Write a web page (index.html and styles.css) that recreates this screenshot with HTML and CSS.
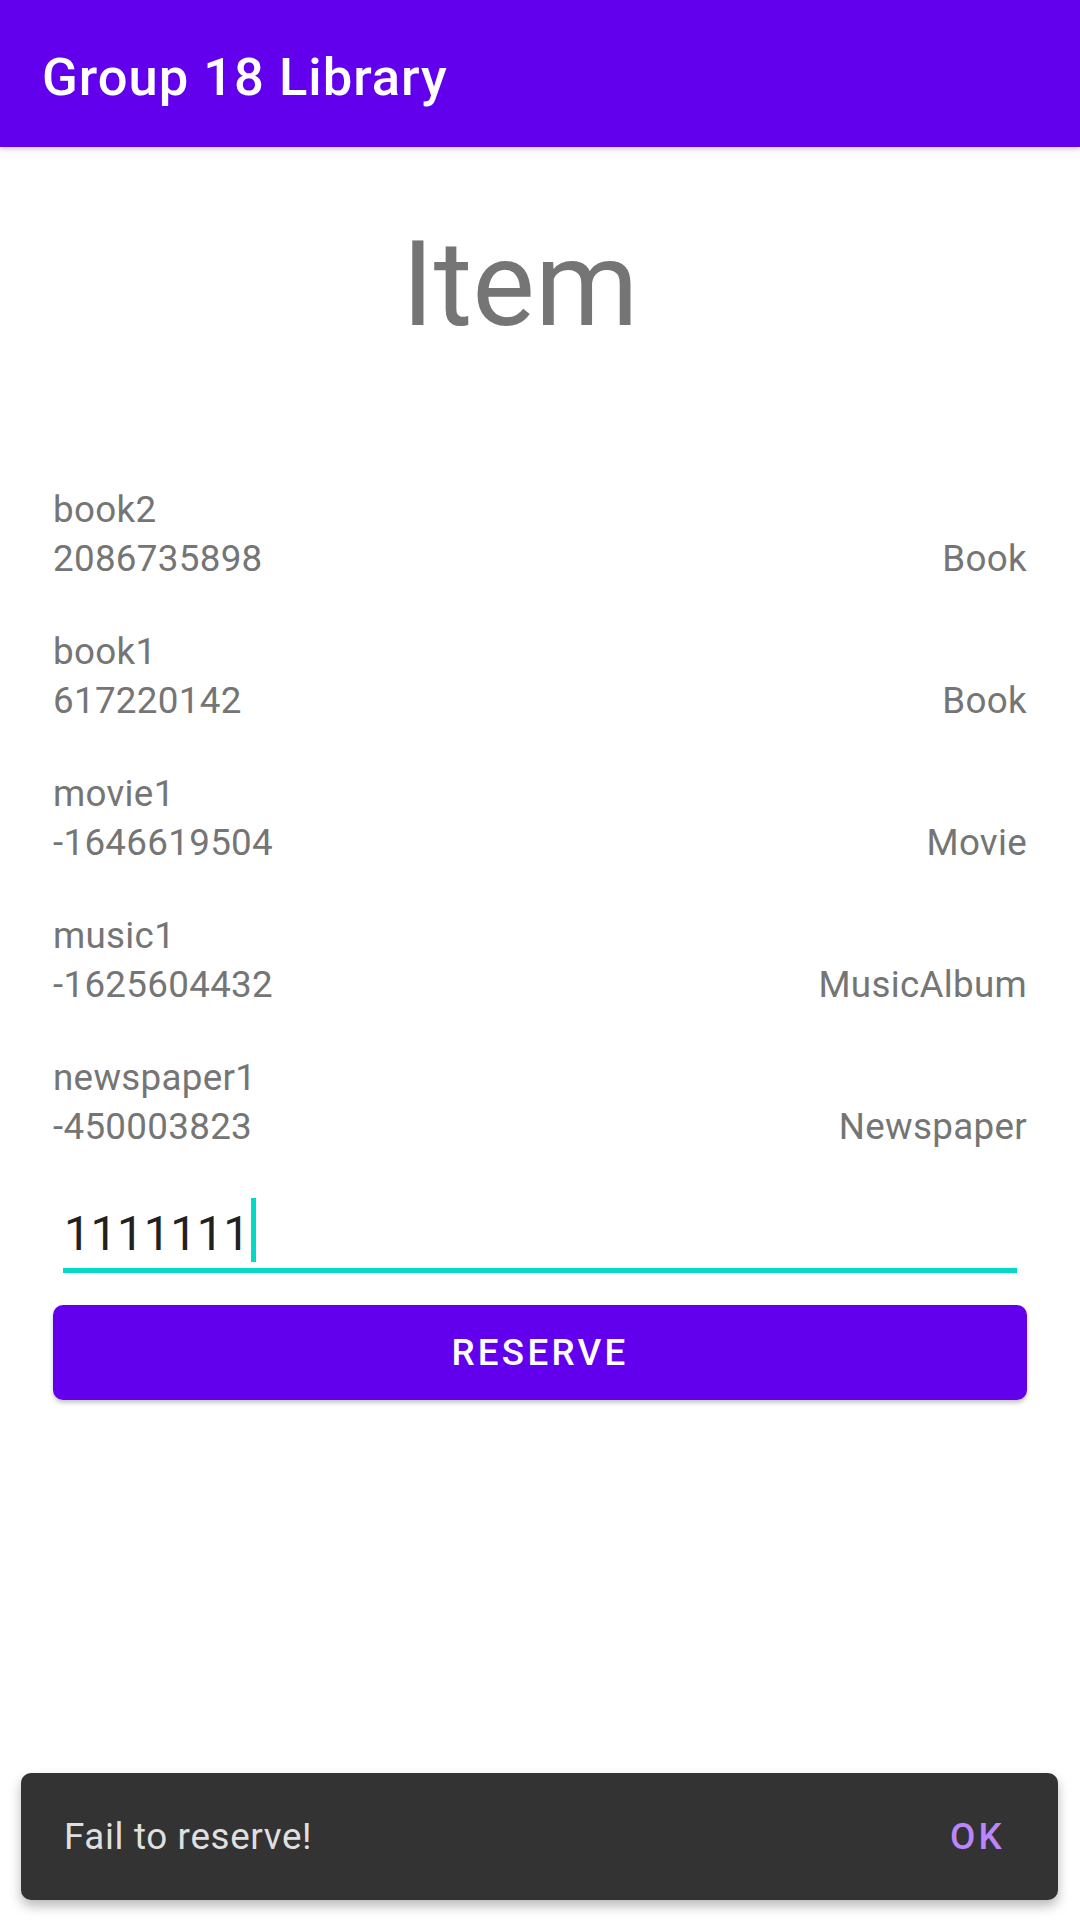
FILE: index.html
```html
<!DOCTYPE html>
<html>
<head>
<meta charset="utf-8">
<link rel="stylesheet" href="styles.css">
</head>
<body>
<div class="screen">
  <header class="appbar"><span class="appbar-title">Group 18 Library</span></header>
  <main class="content">
    <h1 class="page-title">Item</h1>
    <ul class="item-list">
      <li class="item"><div class="item-name">book2</div><div class="item-meta"><span>2086735898</span><span>Book</span></div></li>
      <li class="item"><div class="item-name">book1</div><div class="item-meta"><span>617220142</span><span>Book</span></div></li>
      <li class="item"><div class="item-name">movie1</div><div class="item-meta"><span>-1646619504</span><span>Movie</span></div></li>
      <li class="item"><div class="item-name">music1</div><div class="item-meta"><span>-1625604432</span><span>MusicAlbum</span></div></li>
      <li class="item"><div class="item-name">newspaper1</div><div class="item-meta"><span>-450003823</span><span>Newspaper</span></div></li>
    </ul>
    <div class="field"><span class="field-text">1111111</span><span class="caret"></span></div>
    <button class="reserve-btn">RESERVE</button>
  </main>
  <div class="snackbar">
    <span class="snackbar-text">Fail to reserve!</span>
    <span class="snackbar-action">OK</span>
  </div>
</div>
</body>
</html>
```

FILE: styles.css
```css
* { box-sizing: border-box; }
html, body { margin: 0; padding: 0; }
body {
  font-family: Roboto, "Noto Sans", sans-serif;
  background: #ffffff;
}
.screen {
  position: relative;
  width: 1080px;
  height: 1920px;
  overflow: hidden;
  background: #ffffff;
}
.appbar {
  height: 147px;
  background: #6200EE;
  display: flex;
  align-items: center;
  padding: 6px 0 0 42px;
  box-shadow: 0 2px 5px rgba(0,0,0,0.22);
  position: relative;
  z-index: 1;
}
.appbar-title {
  color: #ffffff;
  font-weight: 500;
  font-size: 52.5px;
  line-height: 62px;
  letter-spacing: 1px;
}
.content {
  padding: 0 53px;
}
.page-title {
  margin: 69px 0 0 0;
  padding-right: 40px;
  text-align: center;
  font-weight: 400;
  font-size: 118px;
  line-height: 138px;
  color: #757575;
}
.item-list {
  list-style: none;
  margin: 131px 0 0 0;
  padding: 0;
  color: #757575;
  font-size: 36.75px;
  line-height: 49px;
  letter-spacing: 0.3px;
}
.item { margin: 0 0 44px 0; }
.item:last-child { margin-bottom: 0; }
.item-meta {
  display: flex;
  justify-content: space-between;
}
.field {
  margin: 47px 10px 0 10px;
  padding: 0 0 6px 1px;
  border-bottom: 5px solid #03DAC5;
  font-size: 47.25px;
  line-height: 56px;
  color: #212121;
}
.caret {
  display: inline-block;
  width: 5px;
  height: 64px;
  margin-left: 1px;
  vertical-align: -12px;
  background: #03DAC5;
}
.reserve-btn {
  display: block;
  width: 100%;
  height: 95px;
  margin: 32px 0 0 0;
  border: none;
  border-radius: 10px;
  background: #6200EE;
  color: #ffffff;
  font-family: Roboto, "Noto Sans", sans-serif;
  font-weight: 500;
  font-size: 36.75px;
  letter-spacing: 3.28px;
  box-shadow: 0 3px 4px rgba(0,0,0,0.22);
  padding: 0;
}
.snackbar {
  position: absolute;
  left: 21px;
  right: 22px;
  top: 1773px;
  height: 127px;
  background: #333333;
  border-radius: 10px;
  display: flex;
  align-items: center;
  justify-content: space-between;
  padding: 0 56px 0 43px;
  box-shadow: 0 6px 12px rgba(0,0,0,0.28);
}
.snackbar-text {
  color: rgba(255,255,255,0.87);
  font-size: 36.75px;
  letter-spacing: 0.65px;
}
.snackbar-action {
  color: #BB86FC;
  font-weight: 500;
  font-size: 36.75px;
  letter-spacing: 3.28px;
  margin-right: -3px;
}
```
